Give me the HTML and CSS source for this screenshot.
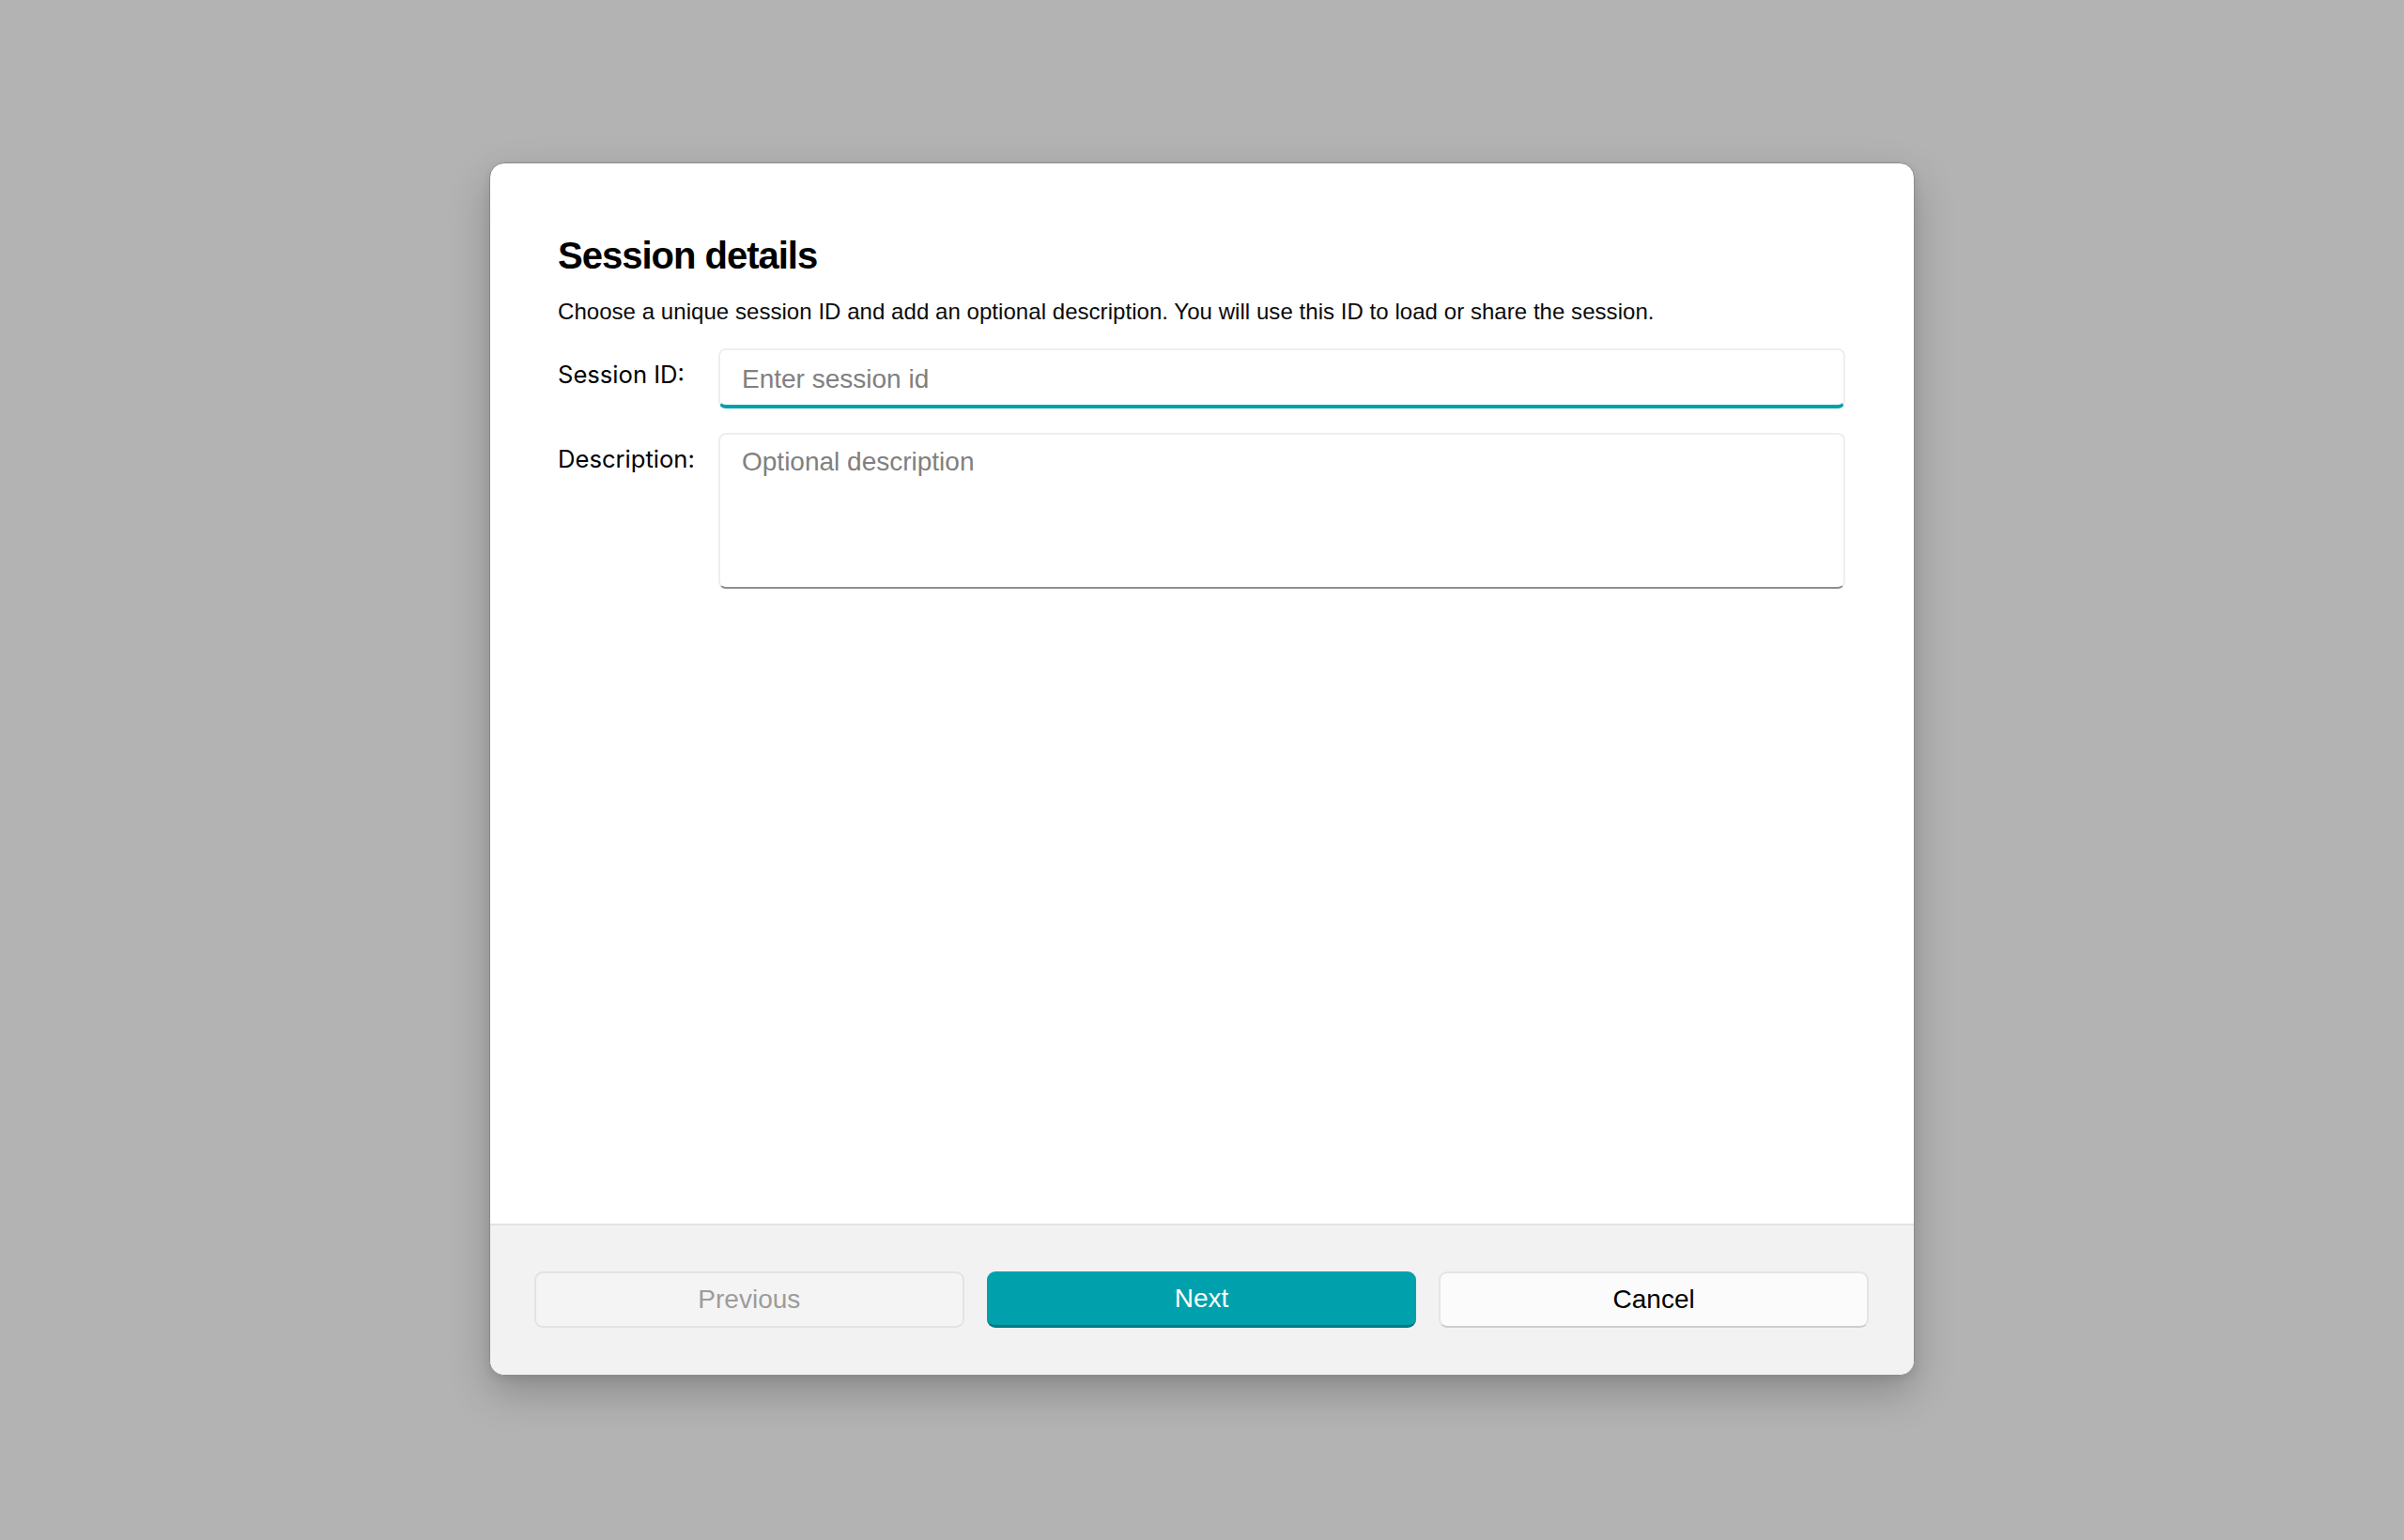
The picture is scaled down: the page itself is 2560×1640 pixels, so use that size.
FILE: index.html
```html
<!DOCTYPE html>
<html lang="en">
<head>
<meta charset="utf-8">
<title>Session details</title>
<link rel="stylesheet" href="styles.css">
</head>
<body>
<div class="backdrop">
  <div class="dialog" role="dialog" aria-labelledby="dlg-title">
    <div class="dialog-body">
      <h1 class="dialog-title" id="dlg-title">Session details</h1>
      <p class="dialog-intro">Choose a unique session ID and add an optional description. You will use this ID to load or share the session.</p>
      <form class="form-grid">
        <label class="field-label" for="session-id">Session ID:</label>
        <input class="text-input" id="session-id" type="text" placeholder="Enter session id">
        <label class="field-label" for="session-desc">Description:</label>
        <textarea class="text-area" id="session-desc" placeholder="Optional description"></textarea>
      </form>
    </div>
    <div class="dialog-footer">
      <button class="btn btn-disabled" type="button" disabled>Previous</button>
      <button class="btn btn-primary" type="button">Next</button>
      <button class="btn btn-secondary" type="button">Cancel</button>
    </div>
  </div>
</div>
</body>
</html>
```
FILE: styles.css
```css
html, body {
  margin: 0;
  padding: 0;
  height: 100%;
}

body {
  background: #b3b3b3;
  font-family: "Liberation Sans", Arial, sans-serif;
  color: #000;
}

.backdrop {
  box-sizing: border-box;
  height: 100%;
  padding-bottom: 2px;
  display: flex;
  align-items: center;
  justify-content: center;
}

.dialog {
  box-sizing: border-box;
  width: 1518px;
  height: 1292px;
  display: flex;
  flex-direction: column;
  background: #fff;
  border: 1px solid #8c8c8c;
  border-radius: 16px;
  overflow: hidden;
  box-shadow: 0 18px 44px rgba(0, 0, 0, 0.22), 0 4px 10px rgba(0, 0, 0, 0.08);
}

.dialog-body {
  flex: 1;
  padding: 74px 73px 0 72px;
}

.dialog-title {
  margin: 0;
  font-size: 40px;
  line-height: 48px;
  font-weight: bold;
  letter-spacing: -1px;
  color: #000;
}

.dialog-intro {
  margin: 20px 0 0;
  font-size: 24px;
  line-height: 32px;
  letter-spacing: 0.05px;
  color: #0a0a0a;
}

.form-grid {
  margin-top: 23px;
  display: grid;
  grid-template-columns: 171px 1fr;
  grid-template-rows: 64px 166px;
  row-gap: 26px;
}

.field-label {
  font-family: Inter, "Liberation Sans", sans-serif;
  font-size: 25.6px;
  line-height: 36px;
  padding-top: 10px;
  color: #000;
}

.text-input,
.text-area {
  box-sizing: border-box;
  width: 100%;
  margin: 0;
  font-family: "Liberation Sans", Arial, sans-serif;
  font-size: 28px;
  color: #000;
  background: #fff;
  border: 2px solid #eeeeee;
  border-radius: 8px;
  outline: none;
}

.text-input {
  height: 64px;
  padding: 4px 23px 0;
  border-bottom: 4px solid #00a0ab;
}

.text-area {
  height: 166px;
  padding: 11px 23px;
  line-height: 36px;
  resize: none;
  border-bottom: 2px solid #8e8e8e;
}

.text-input::placeholder,
.text-area::placeholder {
  color: #808080;
  opacity: 1;
}

.dialog-footer {
  flex: none;
  display: grid;
  grid-template-columns: 1fr 1fr 1fr;
  column-gap: 24px;
  padding: 49px 48px 50px 47px;
  background: #f2f2f2;
  border-top: 2px solid #e4e4e4;
}

.btn {
  box-sizing: border-box;
  height: 60px;
  margin: 0;
  font-family: "Liberation Sans", Arial, sans-serif;
  font-size: 28px;
  border-radius: 9px;
  cursor: pointer;
}

.btn-disabled {
  background: #f4f4f4;
  color: #9c9c9c;
  border: 2px solid #e3e3e3;
  cursor: default;
}

.btn-primary {
  background: #00a1ac;
  color: #fff;
  border: none;
  border-bottom: 3px solid #007980;
}

.btn-secondary {
  background: #fbfbfb;
  color: #000;
  border: 2px solid #e4e4e4;
  border-bottom-color: #cdcdcd;
}
```
